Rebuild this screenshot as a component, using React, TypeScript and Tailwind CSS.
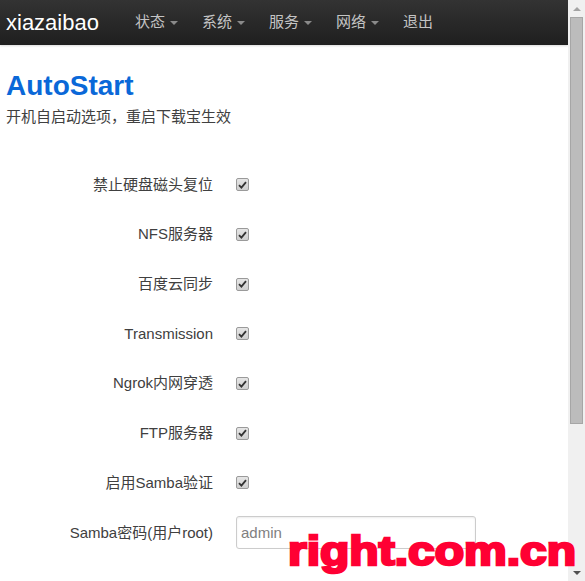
const labelFont = { fontFamily: '"Liberation Sans", "Noto Sans CJK SC", sans-serif' };

const menu = [
  { name: "状态", caret: true },
  { name: "系统", caret: true },
  { name: "服务", caret: true },
  { name: "网络", caret: true },
  { name: "退出", caret: false },
];

const options = [
  "禁止硬盘磁头复位",
  "NFS服务器",
  "百度云同步",
  "Transmission",
  "Ngrok内网穿透",
  "FTP服务器",
  "启用Samba验证",
];

function Checkbox() {
  return (
    <span className="flex h-[13px] w-[13px] items-center justify-center rounded-[2px] border border-[#9a9a9a] bg-gradient-to-b from-[#e6e6e6] to-[#cfcfcf]">
      <svg width="9" height="8" viewBox="0 0 9 8">
        <path d="M1 4.2 L3.4 6.6 L8 1.2" fill="none" stroke="#333" strokeWidth="1.8" />
      </svg>
    </span>
  );
}

function Scrollbar() {
  return (
    <div className="flex w-[17px] shrink-0 flex-col items-center bg-[#f0f0f0]">
      <div className="flex h-[17px] items-center justify-center">
        <span className="h-0 w-0 border-x-[4px] border-b-[4px] border-x-transparent border-b-[#a3a3a3]" />
      </div>
      <div className="h-[407px] w-[13px] border border-[#a6a6a6] bg-[#bcbcbc]" />
      <div className="flex-1" />
      <div className="flex h-[17px] items-center justify-center">
        <span className="h-0 w-0 border-x-[4px] border-t-[4px] border-x-transparent border-t-[#505050]" />
      </div>
    </div>
  );
}

export default function App() {
  return (
    <div className="relative flex h-[581px] w-[585px] overflow-hidden bg-white" style={labelFont}>
      <div className="flex min-w-0 flex-1 flex-col">
        {/* top bar */}
        <div className="flex h-[45px] items-center bg-gradient-to-b from-[#333333] to-[#1f1f1f] shadow-[0_1px_2px_rgba(0,0,0,0.15)]">
          <span className="ml-[6px] text-[22px] leading-none text-white">xiazaibao</span>
          <div className="ml-[36px] flex items-center gap-[24px] text-[15px] text-[#c4c4c4]">
            {menu.map((m) => (
              <span key={m.name} className="flex items-center">
                {m.name}
                {m.caret && (
                  <span className="ml-[5px] mt-[1px] h-0 w-0 border-x-[4px] border-t-[4px] border-x-transparent border-t-[#8a8a8a]" />
                )}
              </span>
            ))}
          </div>
        </div>

        {/* heading */}
        <div className="px-[6px] pt-[25px]">
          <h2 className="text-[28px] font-bold leading-[32px] text-[#0a68d8]">AutoStart</h2>
          <p className="mt-[6px] text-[15px] leading-[18px] text-[#404040]">开机自启动选项，重启下载宝生效</p>
        </div>

        {/* options */}
        <div className="mt-[34px] flex flex-col">
          {options.map((o) => (
            <div key={o} className="flex h-[49.7px] items-center">
              <span className="w-[213px] text-right text-[15px] text-[#404040]">{o}</span>
              <span className="ml-[23px]">
                <Checkbox />
              </span>
            </div>
          ))}
          <div className="flex h-[50px] items-center">
            <span className="w-[213px] text-right text-[15px] text-[#404040]">Samba密码(用户root)</span>
            <div className="ml-[23px] flex h-[33px] w-[240px] items-center rounded-[3px] border border-[#cccccc] px-[4px] text-[15px] text-[#808080] shadow-[inset_0_1px_2px_rgba(0,0,0,0.08)]">
              admin
            </div>
          </div>
        </div>
      </div>
      <Scrollbar />

      {/* watermark */}
      <div className="absolute left-[288px] top-[526px] origin-left scale-x-[1.2] text-[40px] font-black leading-[50px] text-[#ff0033] [-webkit-text-stroke:2.5px_#ff0033]">
        right.com.cn
      </div>
    </div>
  );
}
